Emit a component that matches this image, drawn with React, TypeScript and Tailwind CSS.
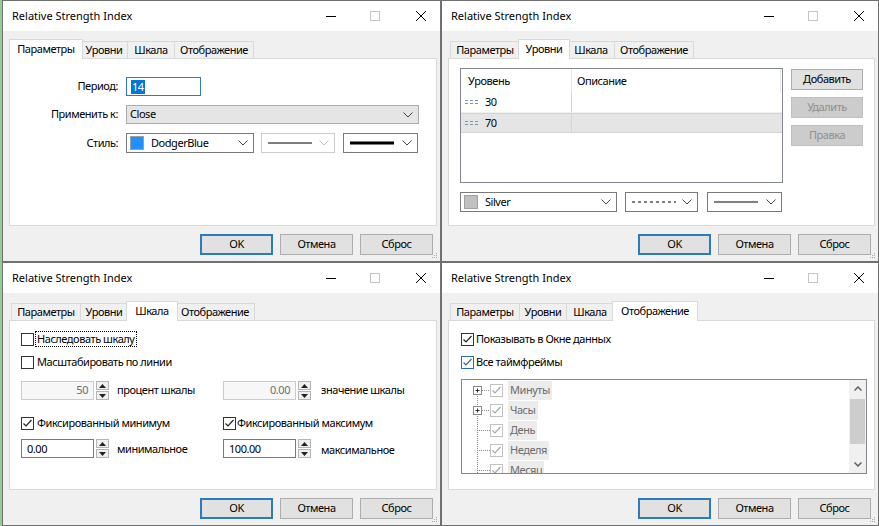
import React from "react";

type TabDef = { label: string; on: string; off: string };
const TABS: TabDef[] = [
  { label: "Параметры", on: "w-[74px]", off: "w-[70px]" },
  { label: "Уровни", on: "w-[52px]", off: "w-[48px]" },
  { label: "Шкала", on: "w-[52px]", off: "w-[48px]" },
  { label: "Отображение", on: "w-[86px]", off: "w-[80px]" },
];

function Chevron({ color = "#444" }: { color?: string }) {
  return (
    <svg width="10" height="6" viewBox="0 0 10 6">
      <polyline points="0.5,0.5 5,5 9.5,0.5" fill="none" stroke={color} strokeWidth="1" />
    </svg>
  );
}

function TitleBar() {
  return (
    <div className="h-[30px] shrink-0 bg-white flex items-center">
      <span className="pl-[9px] text-[11px] tracking-normal text-black">Relative Strength Index</span>
      <div className="ml-auto flex items-center pr-[14px]">
        <svg width="10" height="10" viewBox="0 0 10 10">
          <line x1="0" y1="5.5" x2="10" y2="5.5" stroke="#000" strokeWidth="1" />
        </svg>
        <svg width="10" height="10" viewBox="0 0 10 10" className="ml-[34px]">
          <rect x="0.5" y="0.5" width="9" height="9" fill="none" stroke="#c4c4c4" strokeWidth="1" />
        </svg>
        <svg width="10" height="10" viewBox="0 0 10 10" className="ml-[36px]">
          <line x1="0" y1="0" x2="10" y2="10" stroke="#000" strokeWidth="1" />
          <line x1="10" y1="0" x2="0" y2="10" stroke="#000" strokeWidth="1" />
        </svg>
      </div>
    </div>
  );
}

function Tabs({ active }: { active: number }) {
  return (
    <div className="relative z-10 flex items-end h-[19px] pl-[2px]">
      {TABS.map((t, i) =>
        i === active ? (
          <div
            key={t.label}
            className={`${t.on} -mx-[2px] h-[20px] mb-[-1px] bg-white border-x border-t border-[#d9d9d9] flex items-start justify-center pt-[1px] relative z-10`}
          >
            {t.label}
          </div>
        ) : (
          <div
            key={t.label}
            className={`${t.off} h-[17px] bg-[#f0f0f0] border-x border-t border-[#d9d9d9] -ml-px first:ml-0 flex items-center justify-center`}
          >
            {t.label}
          </div>
        )
      )}
    </div>
  );
}

function Btn({ children, primary = false, disabled = false, w = "w-[73px]" }: { children: React.ReactNode; primary?: boolean; disabled?: boolean; w?: string }) {
  const cls = primary
    ? "border-2 border-[#2d7bbd] bg-[#e1e1e1] text-black"
    : disabled
    ? "border border-[#bfbfbf] bg-[#cccccc] text-[#8f8f8f]"
    : "border border-[#adadad] bg-[#e1e1e1] text-black";
  return <div className={`${w} h-[21px] flex items-center justify-center ${cls}`}>{children}</div>;
}

function Grip() {
  return (
    <svg width="6" height="6" viewBox="0 0 6 6" className="absolute right-[2px] bottom-[2px]">
      <rect x="4" y="0" width="1" height="1" fill="#a8a8a8" />
      <rect x="2" y="2" width="1" height="1" fill="#a8a8a8" />
      <rect x="4" y="2" width="1" height="1" fill="#a8a8a8" />
      <rect x="0" y="4" width="1" height="1" fill="#a8a8a8" />
      <rect x="2" y="4" width="1" height="1" fill="#a8a8a8" />
      <rect x="4" y="4" width="1" height="1" fill="#a8a8a8" />
    </svg>
  );
}

function Window({ active, left, children }: { active: number; left: boolean; children: React.ReactNode }) {
  return (
    <div className={`h-full flex ${left ? "bg-[#8fd08f] pl-[2px]" : ""}`}>
      <div className="relative flex-1 h-full border border-[#707070] bg-[#f0f0f0] flex flex-col">
        <TitleBar />
        <div className="flex-1 flex flex-col pl-[6px] pr-[3px] pt-[8px]">
          <Tabs active={active} />
          <div className="flex-1 bg-white border border-[#d9d9d9]">{children}</div>
          <div className="h-[35px] shrink-0 flex items-start justify-end gap-[7px] pt-[8px] pr-[4px]">
            <Btn primary>OK</Btn>
            <Btn>Отмена</Btn>
            <Btn>Сброс</Btn>
          </div>
        </div>
        <Grip />
      </div>
    </div>
  );
}

function LineSample({ kind }: { kind: "thin" | "thick" | "dash" }) {
  return (
    <svg width="44" height="4" viewBox="0 0 44 4">
      {kind === "thin" && <line x1="0" y1="2" x2="44" y2="2" stroke="#000" strokeWidth="1" />}
      {kind === "thick" && <line x1="0" y1="2" x2="44" y2="2" stroke="#000" strokeWidth="3" />}
      {kind === "dash" && <line x1="0" y1="2" x2="44" y2="2" stroke="#000" strokeWidth="1" strokeDasharray="3 3" />}
    </svg>
  );
}

function LineSelect({ kind, w, disabled = false }: { kind: "thin" | "thick" | "dash"; w: string; disabled?: boolean }) {
  return (
    <div className={`${w} h-[20px] bg-white border ${disabled ? "border-[#cccccc]" : "border-[#7a7a7a]"} flex items-center pl-[6px] pr-[5px]`}>
      <LineSample kind={kind} />
      <span className="ml-auto">
        <Chevron color={disabled ? "#c0c0c0" : "#444"} />
      </span>
    </div>
  );
}

function ColorSelect({ color, name, w }: { color: string; name: string; w: string }) {
  return (
    <div className={`${w} h-[20px] bg-white border border-[#7a7a7a] flex items-center pl-[3px] pr-[5px]`}>
      <span className={`w-[14px] h-[14px] border border-[#a0a0a0] ${color}`} />
      <span className="ml-[7px]">{name}</span>
      <span className="ml-auto">
        <Chevron />
      </span>
    </div>
  );
}

function CheckBox({ checked, blue = false, faded = false }: { checked: boolean; blue?: boolean; faded?: boolean }) {
  const stroke = faded ? "#c2c2c2" : blue ? "#2b6ea8" : "#333333";
  const mark = faded ? "#a9a9a9" : blue ? "#2b6ea8" : "#222222";
  return (
    <svg width="13" height="13" viewBox="0 0 13 13" className="shrink-0">
      <rect x="0.5" y="0.5" width="12" height="12" fill="#fff" stroke={stroke} strokeWidth="1" />
      {checked && <polyline points="2.5,6.5 5,9 10.5,3" fill="none" stroke={mark} strokeWidth="1.2" />}
    </svg>
  );
}

function Spinner() {
  return (
    <div className="w-[13px] h-[19px] flex flex-col gap-[1px] shrink-0">
      <div className="flex-1 border border-[#b5b5b5] bg-[#f0f0f0] flex items-center justify-center">
        <svg width="7" height="4" viewBox="0 0 7 4"><polygon points="0,4 3.5,0 7,4" fill="#222" /></svg>
      </div>
      <div className="flex-1 border border-[#b5b5b5] bg-[#f0f0f0] flex items-center justify-center">
        <svg width="7" height="4" viewBox="0 0 7 4"><polygon points="0,0 3.5,4 7,0" fill="#222" /></svg>
      </div>
    </div>
  );
}

function NumField({ value, disabled = false, right = false }: { value: string; disabled?: boolean; right?: boolean }) {
  return (
    <div className="flex items-center gap-[2px]">
      <div
        className={`w-[73px] h-[19px] border flex items-center px-[5px] ${right ? "justify-end" : ""} ${
          disabled ? "border-[#cccccc] bg-[#f7f7f7] text-[#6d6d6d]" : "border-[#7a7a7a] bg-white text-black"
        }`}
      >
        {value}
      </div>
      <Spinner />
    </div>
  );
}

function ParamsPanel() {
  return (
    <div className="grid grid-cols-[108px_auto] gap-x-[8px] gap-y-[9px] pt-[18px] items-center">
      <div className="text-right">Период:</div>
      <div className="w-[75px] h-[19px] border border-[#2d7bbd] bg-white flex items-center pl-[4px]">
        <span className="bg-[#0078d7] text-white px-[1px] leading-[14px]">14</span>
      </div>
      <div className="text-right">Применить к:</div>
      <div className="w-[293px] h-[19px] border border-[#acacac] bg-[#e5e5e5] flex items-center pl-[3px] pr-[5px]">
        <span>Close</span>
        <span className="ml-auto">
          <Chevron />
        </span>
      </div>
      <div className="text-right">Стиль:</div>
      <div className="flex items-center">
        <ColorSelect color="bg-[#1e90ff]" name="DodgerBlue" w="w-[128px]" />
        <div className="ml-[7px]">
          <LineSelect kind="thin" w="w-[74px]" disabled />
        </div>
        <div className="ml-[8px]">
          <LineSelect kind="thick" w="w-[75px]" />
        </div>
      </div>
    </div>
  );
}

function DashIcon() {
  return (
    <svg width="14" height="5" viewBox="0 0 14 5">
      {[0, 5, 10].map((x) => (
        <g key={x}>
          <rect x={x} y="0" width="3" height="1" fill="#7d97b3" />
          <rect x={x} y="3" width="3" height="1" fill="#7d97b3" />
        </g>
      ))}
    </svg>
  );
}

function LevelsPanel() {
  return (
    <div className="pl-[11px] pt-[9px]">
      <div className="flex items-start">
        <div className="w-[323px] h-[115px] border border-[#828790] bg-white flex flex-col">
          <div className="h-[24px] flex">
            <div className="w-[111px] border-r border-[#e5e5e5] flex items-center pl-[7px] pt-[1px]">Уровень</div>
            <div className="w-[209px] border-r border-[#e5e5e5] flex items-center pl-[5px] pt-[1px]">Описание</div>
          </div>
          {[
            { v: "30", sel: false },
            { v: "70", sel: true },
          ].map((r) => (
            <div key={r.v} className={`h-[20px] flex border-b ${r.sel ? "bg-[#e5e5e5] border-t border-[#d4d4d4]" : "border-[#f0f0f0]"}`}>
              <div className="w-[111px] border-r border-[#d4d4d4] flex items-center pl-[4px] gap-[6px]">
                <DashIcon />
                <span>{r.v}</span>
              </div>
              <div className="w-[209px]" />
            </div>
          ))}
        </div>
        <div className="ml-[8px] flex flex-col gap-[7px] pt-[1px]">
          <Btn w="w-[72px]">Добавить</Btn>
          <Btn w="w-[72px]" disabled>
            Удалить
          </Btn>
          <Btn w="w-[72px]" disabled>
            Правка
          </Btn>
        </div>
      </div>
      <div className="flex items-center mt-[9px]">
        <ColorSelect color="bg-[#c0c0c0]" name="Silver" w="w-[157px]" />
        <div className="ml-[8px]">
          <LineSelect kind="dash" w="w-[73px]" />
        </div>
        <div className="ml-[9px]">
          <LineSelect kind="thin" w="w-[75px]" />
        </div>
      </div>
    </div>
  );
}

function ScalePanel() {
  return (
    <div className="pl-[11px] pt-[8px] flex flex-col">
      <div className="h-[20px] flex items-center">
        <CheckBox checked={false} />
        <span className="ml-[1px] px-[1px] border border-dotted border-black leading-[14px]">Наследовать шкалу</span>
      </div>
      <div className="h-[20px] mt-[3px] flex items-center">
        <CheckBox checked={false} />
        <span className="ml-[3px]">Масштабировать по линии</span>
      </div>
      <div className="mt-[9px] grid grid-cols-[202px_auto] items-center">
        <div className="flex items-center">
          <NumField value="50" disabled right />
          <span className="ml-[8px]">процент шкалы</span>
        </div>
        <div className="flex items-center">
          <NumField value="0.00" disabled right />
          <span className="ml-[10px]">значение шкалы</span>
        </div>
      </div>
      <div className="mt-[13px] h-[20px] grid grid-cols-[202px_auto] items-center">
        <div className="flex items-center">
          <CheckBox checked />
          <span className="ml-[3px]">Фиксированный минимум</span>
        </div>
        <div className="flex items-center">
          <CheckBox checked />
          <span className="ml-[1px]">Фиксированный максимум</span>
        </div>
      </div>
      <div className="mt-[6px] grid grid-cols-[202px_auto] items-center">
        <div className="flex items-center">
          <NumField value="0.00" />
          <span className="ml-[8px]">минимальное</span>
        </div>
        <div className="flex items-center">
          <NumField value="100.00" />
          <span className="ml-[10px] mt-[3px]">максимальное</span>
        </div>
      </div>
    </div>
  );
}

function TreeConnector({ first, box }: { first: boolean; box: boolean }) {
  return (
    <svg width="28" height="20" viewBox="0 0 28 20" className="shrink-0">
      <line x1="15.5" y1={first ? 14 : 0} x2="15.5" y2="20" stroke="#8a8a8a" strokeWidth="1" strokeDasharray="1 1" />
      <line x1={box ? 20 : 15} y1="10.5" x2="28" y2="10.5" stroke="#8a8a8a" strokeWidth="1" strokeDasharray="1 1" />
      {box && (
        <g>
          <rect x="11.5" y="6.5" width="8" height="8" fill="#fff" stroke="#8a8a8a" strokeWidth="1" />
          <line x1="13.5" y1="10.5" x2="17.5" y2="10.5" stroke="#333" strokeWidth="1" />
          <line x1="15.5" y1="8.5" x2="15.5" y2="12.5" stroke="#333" strokeWidth="1" />
        </g>
      )}
    </svg>
  );
}

function DisplayPanel() {
  const items = [
    { t: "Минуты", box: true },
    { t: "Часы", box: true },
    { t: "День", box: false },
    { t: "Неделя", box: false },
    { t: "Месяц", box: false },
  ];
  return (
    <div className="pl-[12px] pt-[8px] flex flex-col">
      <div className="h-[20px] flex items-center">
        <CheckBox checked />
        <span className="ml-[2px]">Показывать в Окне данных</span>
      </div>
      <div className="h-[20px] mt-[3px] flex items-center">
        <CheckBox checked blue />
        <span className="ml-[2px]">Все таймфреймы</span>
      </div>
      <div className="mt-[7px] w-[406px] h-[95px] border border-[#828790] bg-white flex overflow-hidden">
        <div className="flex-1 flex flex-col overflow-hidden">
          {items.map((it, i) => (
            <div key={it.t} className="h-[20px] shrink-0 flex items-center">
              <TreeConnector first={i === 0} box={it.box} />
              <CheckBox checked faded />
              <span className="ml-[5px] h-[19px] px-[2px] bg-[#ececec] text-[#6d6d6d] flex items-center">{it.t}</span>
            </div>
          ))}
        </div>
        <div className="w-[17px] h-full bg-[#f0f0f0] flex flex-col items-center">
          <div className="h-[17px] flex items-center justify-center">
            <svg width="8" height="5" viewBox="0 0 8 5">
              <polyline points="0.5,4.5 4,1 7.5,4.5" fill="none" stroke="#606060" strokeWidth="1.5" />
            </svg>
          </div>
          <div className="w-[15px] h-[45px] mt-[2px] bg-[#cdcdcd]" />
          <div className="mt-auto h-[17px] flex items-center justify-center">
            <svg width="8" height="5" viewBox="0 0 8 5">
              <polyline points="0.5,0.5 4,4 7.5,0.5" fill="none" stroke="#606060" strokeWidth="1.5" />
            </svg>
          </div>
        </div>
      </div>
    </div>
  );
}

export default function App() {
  return (
    <div className="w-[879px] h-[526px] overflow-hidden bg-[#f0f0f0] grid grid-cols-[441px_438px] grid-rows-[262px_264px] font-['Noto_Sans',sans-serif] text-[11px] tracking-[-0.45px] text-black">
      <Window active={0} left>
        <ParamsPanel />
      </Window>
      <Window active={1} left={false}>
        <LevelsPanel />
      </Window>
      <Window active={2} left>
        <ScalePanel />
      </Window>
      <Window active={3} left={false}>
        <DisplayPanel />
      </Window>
    </div>
  );
}
